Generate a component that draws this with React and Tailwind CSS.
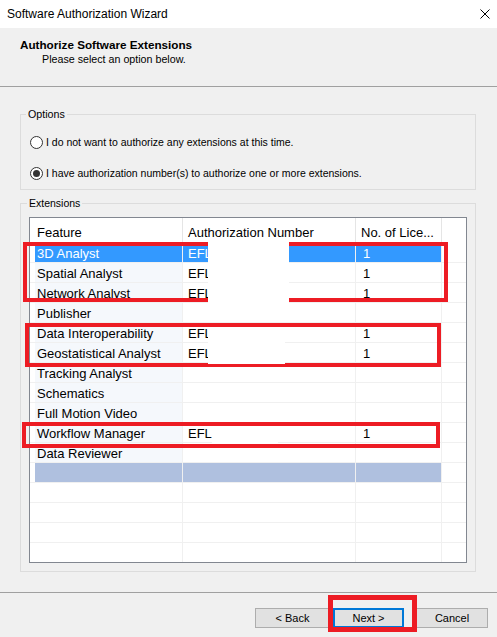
import React from "react";

const features = [
  { name: "3D Analyst", auth: "EFL", count: "1", selected: true },
  { name: "Spatial Analyst", auth: "EFL", count: "1" },
  { name: "Network Analyst", auth: "EFL", count: "1" },
  { name: "Publisher" },
  { name: "Data Interoperability", auth: "EFL", count: "1" },
  { name: "Geostatistical Analyst", auth: "EFL", count: "1" },
  { name: "Tracking Analyst" },
  { name: "Schematics" },
  { name: "Full Motion Video" },
  { name: "Workflow Manager", auth: "EFL", count: "1" },
  { name: "Data Reviewer" },
];

function Radio({ checked, children }) {
  return (
    <div className="flex h-[16px] items-center pl-[9px]">
      <span className="flex size-[13px] items-center justify-center rounded-full border border-[#333333] bg-white">
        {checked && <span className="size-[7px] rounded-full bg-[#333333]" />}
      </span>
      <span className="ml-[3px] text-[10.5px] leading-[13px] text-black">{children}</span>
    </div>
  );
}

function FeatureRow({ f }) {
  const sel = f.selected;
  return (
    <div className="flex h-[20px] shrink-0 border-b border-[#f0f0f0]">
      <div className="flex w-[153px] border-r border-[#f0f0f0] pl-[5px]">
        <div
          className={`flex flex-1 items-center pl-[2px] pt-[1px] ${
            sel ? "bg-[#3399ff] text-white" : "bg-[#f5f8fc] text-black"
          }`}
        >
          {f.name}
        </div>
      </div>
      <div
        className={`flex w-[173px] items-center border-r border-[#f0f0f0] pl-[5px] pt-[1px] ${
          sel ? "bg-[#3399ff] text-white" : "text-black"
        }`}
      >
        {f.auth}
      </div>
      <div
        className={`flex w-[86px] items-center border-r border-[#f0f0f0] pl-[7px] pt-[1px] ${
          sel ? "bg-[#3399ff] text-white" : "text-black"
        }`}
      >
        {f.count}
      </div>
      <div className="flex-1" />
    </div>
  );
}

function NewRow() {
  return (
    <div className="flex h-[20px] shrink-0 border-b border-[#f0f0f0]">
      <div className="flex w-[153px] border-r border-[#f0f0f0] pl-[5px]">
        <div className="flex-1 bg-[#afc0df]" />
      </div>
      <div className="w-[173px] border-r border-[#f0f0f0] bg-[#afc0df]" />
      <div className="w-[86px] border-r border-[#f0f0f0] bg-[#afc0df]" />
      <div className="flex-1" />
    </div>
  );
}

function EmptyRow() {
  return (
    <div className="flex h-[20px] shrink-0 border-b border-[#f0f0f0]">
      <div className="w-[153px] border-r border-[#f0f0f0]" />
      <div className="w-[173px] border-r border-[#f0f0f0]" />
      <div className="w-[86px] border-r border-[#f0f0f0]" />
      <div className="flex-1" />
    </div>
  );
}

export default function App() {
  return (
    <div className="relative flex h-[637px] w-[497px] flex-col overflow-hidden bg-[#f0f0f0] font-['Liberation_Sans',Arial,sans-serif] text-black">
      {/* title bar */}
      <div className="flex h-[28px] shrink-0 items-center justify-between bg-white pb-[1px] pl-[7px] pr-[8px]">
        <span className="text-[12px] leading-[14px]">Software Authorization Wizard</span>
        <svg width="10" height="10" viewBox="0 0 10 10" className="-mr-[1px]">
          <path d="M0.5 0.5 L9.5 9.5 M9.5 0.5 L0.5 9.5" stroke="#000" strokeWidth="1" />
        </svg>
      </div>

      {/* page header */}
      <div className="h-[59px] shrink-0 border-b border-[#a0a0a0] bg-[#f0f0f0] pl-[20px] pt-[10px]">
        <div className="text-[11.7px] font-bold leading-[13px]">Authorize Software Extensions</div>
        <div className="mt-[2px] pl-[22px] text-[10.7px] leading-[13px]">Please select an option below.</div>
      </div>

      {/* body */}
      <div className="flex flex-1 flex-col">
        <fieldset className="ml-[20px] mr-[21px] mt-[21px] border border-[#dcdcdc] pb-[8px]">
          <legend className="ml-[5px] px-[2px] text-[10.7px] leading-[13px]">Options</legend>
          <div className="mt-[13px]">
            <Radio>I do not want to authorize any extensions at this time.</Radio>
          </div>
          <div className="mt-[15px]">
            <Radio checked>I have authorization number(s) to authorize one or more extensions.</Radio>
          </div>
        </fieldset>

        <fieldset className="ml-[20px] mr-[21px] mt-[7px] border border-[#dcdcdc] px-[8px] pb-[8px]">
          <legend className="-ml-[2px] px-[2px] text-[10.5px] leading-[13px]">Extensions</legend>
          <div className="mt-[7px] flex h-[346px] flex-col overflow-hidden border border-[#828790] bg-white text-[13px] leading-[15px]">
            <div className="flex h-[25px] shrink-0">
              <div className="flex w-[153px] items-center border-r border-[#e5e5e5] pl-[7px] pt-[3px]">Feature</div>
              <div className="flex w-[173px] items-center border-r border-[#e5e5e5] pl-[5px] pt-[3px]">Authorization Number</div>
              <div className="flex w-[86px] items-center border-r border-[#e5e5e5] pl-[5px] pt-[3px]">No. of Lice...</div>
              <div className="flex-1" />
            </div>
            {features.map((f) => (
              <FeatureRow key={f.name} f={f} />
            ))}
            <NewRow />
            <EmptyRow />
            <EmptyRow />
            <EmptyRow />
            <EmptyRow />
          </div>
        </fieldset>
      </div>

      {/* footer */}
      <div className="flex h-[45px] shrink-0 border-t border-[#a0a0a0] pt-[15px] text-[11px]">
        <div className="ml-[255px] flex h-[20px] w-[75px] items-center justify-center border border-[#adadad] bg-[#e1e1e1]">&lt; Back</div>
        <div className="ml-[3px] flex h-[20px] w-[71px] items-center justify-center border-2 border-[#0078d7] bg-[#e1e1e1]">Next &gt;</div>
        <div className="ml-[12px] flex h-[20px] w-[72px] items-center justify-center border border-[#adadad] bg-[#e1e1e1]">Cancel</div>
      </div>

      {/* red markup boxes and white blanking over the numbers */}
      <div className="absolute left-[23px] top-[242px] h-[60px] w-[425px] border-4 border-[#ed1c24]" />
      <div className="absolute left-[25px] top-[323px] h-[44px] w-[416px] border-4 border-[#ed1c24]" />
      <div className="absolute left-[22px] top-[422px] h-[26px] w-[418px] border-4 border-[#ed1c24]" />
      <div className="absolute left-[328px] top-[595px] h-[37px] w-[89px] border-[5px] border-[#ed1c24]" />
      <div className="absolute left-[208px] top-[241px] h-[62px] w-[81px] bg-white" />
      <div className="absolute left-[208px] top-[327px] h-[37px] w-[77px] bg-white" />
      <div className="absolute left-[212px] top-[426px] h-[17px] w-[66px] bg-white" />
    </div>
  );
}
